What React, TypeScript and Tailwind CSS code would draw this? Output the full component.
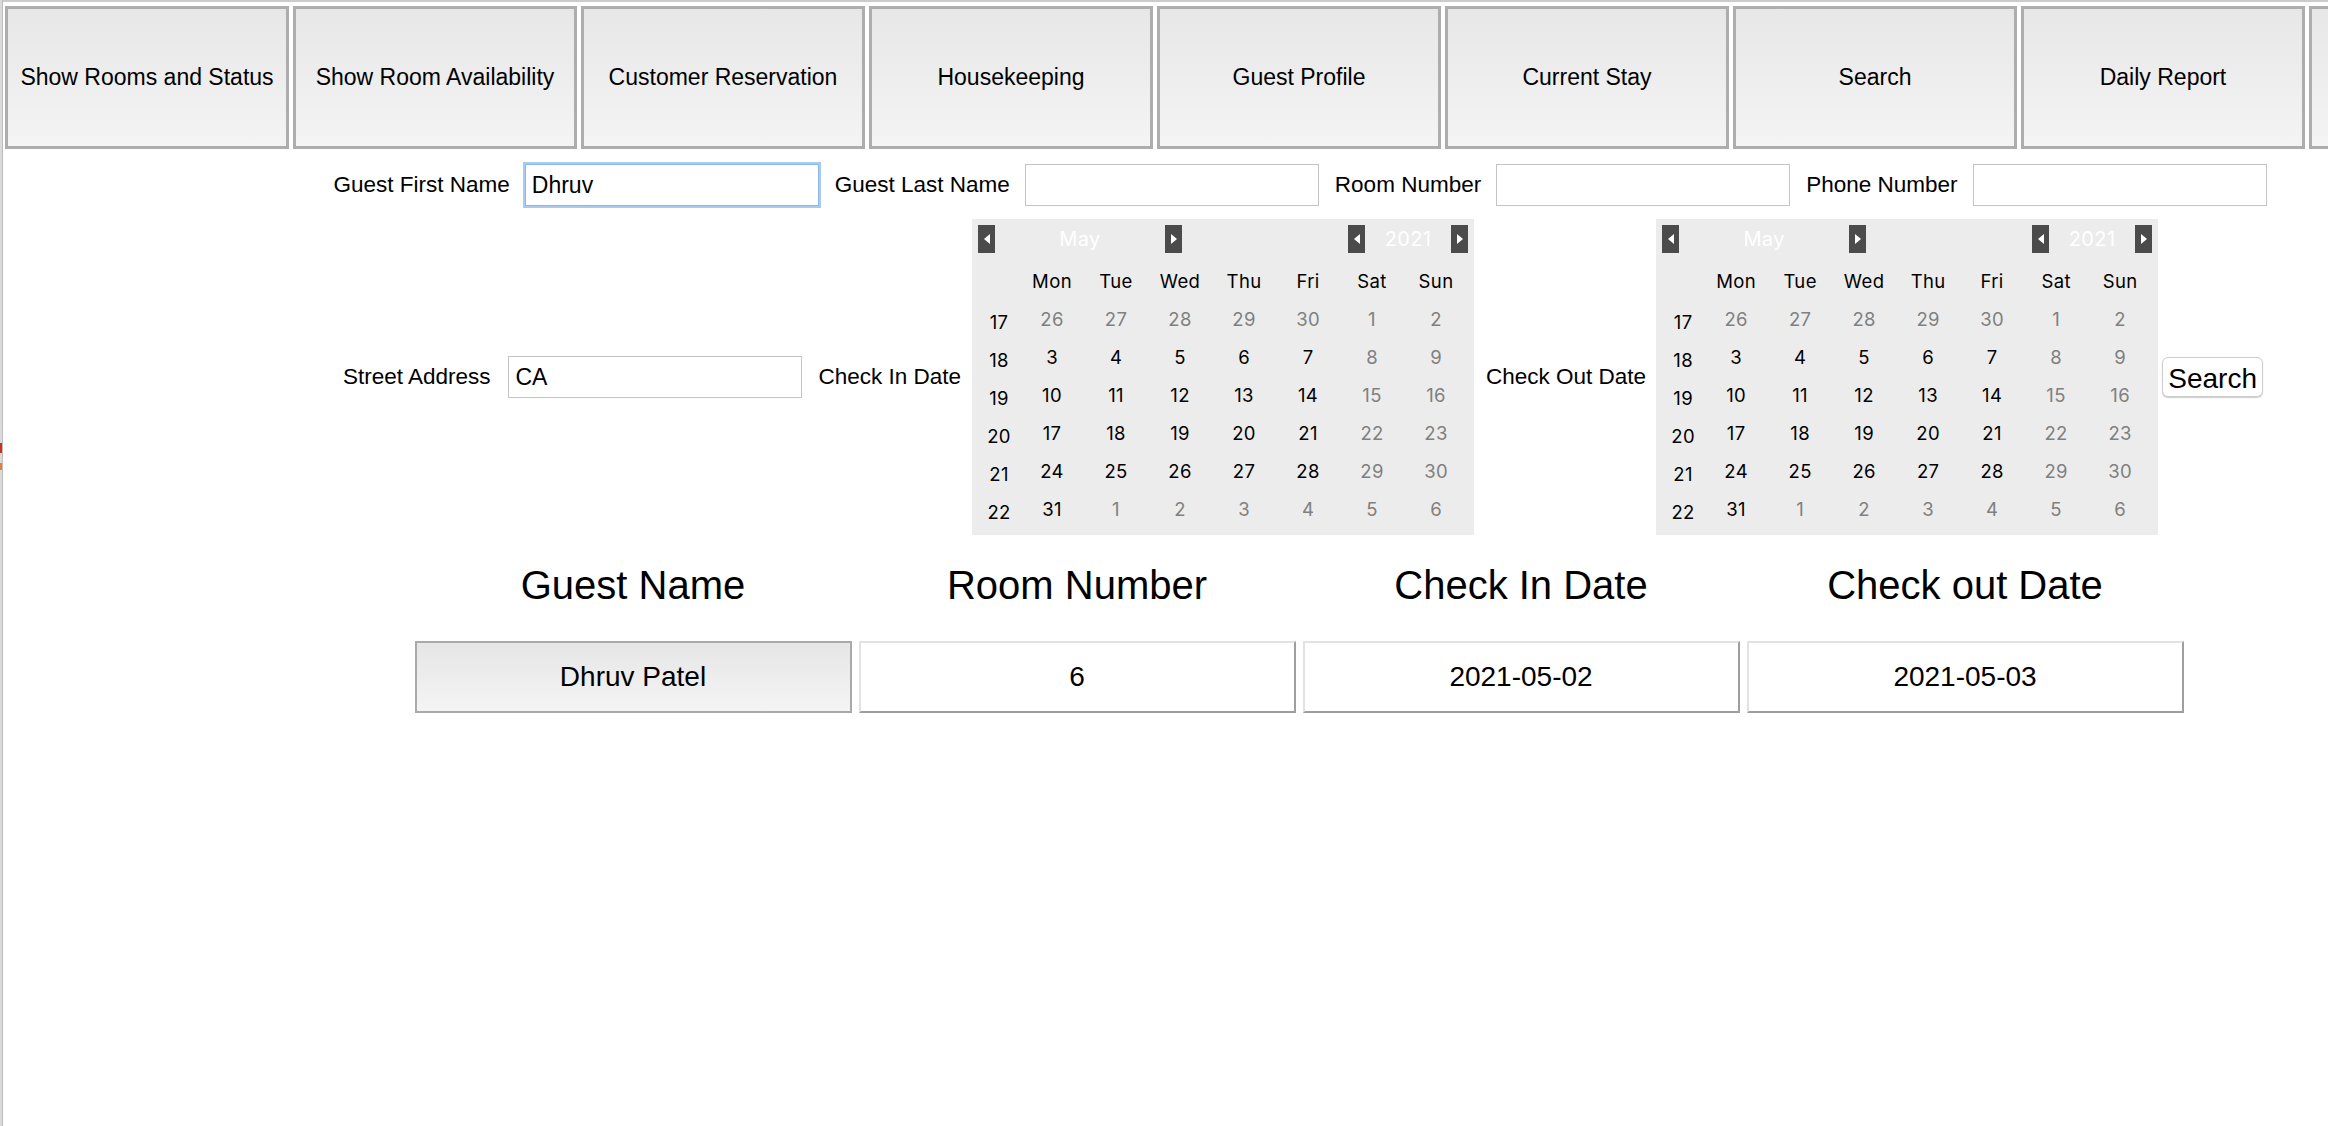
const navItems = [
  "Show Rooms and Status",
  "Show Room Availability",
  "Customer Reservation",
  "Housekeeping",
  "Guest Profile",
  "Current Stay",
  "Search",
  "Daily Report",
  "",
];

const dayNames = ["Mon", "Tue", "Wed", "Thu", "Fri", "Sat", "Sun"];
const weekNums = [17, 18, 19, 20, 21, 22];

// April 26 .. June 6, 2021
const days = Array.from({ length: 42 }, (_, i) => {
  if (i < 5) return { n: 26 + i, muted: true };
  const d = i - 4;
  if (d <= 31) return { n: d, muted: i % 7 >= 5 };
  return { n: d - 31, muted: true };
});

function Arrow({ dir }: { dir: "left" | "right" }) {
  return (
    <div className="flex h-[28px] w-[17px] items-center justify-center bg-[#4b4b4b]">
      <svg width="6" height="10" viewBox="0 0 6 10">
        {dir === "left" ? (
          <polygon points="6,0 6,10 0,5" fill="#fff" />
        ) : (
          <polygon points="0,0 0,10 6,5" fill="#fff" />
        )}
      </svg>
    </div>
  );
}

function Calendar() {
  return (
    <div className="w-[502px] bg-[#ececec] p-[6px] font-['Inter',sans-serif] text-[18.5px] tracking-[0.02em]">
      <div className="flex h-[28px] justify-between">
        <div className="flex items-center">
          <Arrow dir="left" />
          <span className="w-[170px] text-center text-[20px] text-white">May</span>
          <Arrow dir="right" />
        </div>
        <div className="flex items-center">
          <Arrow dir="left" />
          <span className="w-[86px] text-center text-[20px] text-white">2021</span>
          <Arrow dir="right" />
        </div>
      </div>
      <div className="mt-[10px] grid grid-cols-[42px_repeat(7,64px)] auto-rows-[38px] items-center text-center">
        <span />
        {dayNames.map((d) => (
          <span key={d} className="text-black">
            {d}
          </span>
        ))}
        {weekNums.map((w, r) => (
          <div key={w} className="contents">
            <span className="pt-[5px] text-black">{w}</span>
            {days.slice(r * 7, r * 7 + 7).map((d, j) => (
              <span key={j} className={d.muted ? "text-[#808080]" : "text-black"}>
                {d.n}
              </span>
            ))}
          </div>
        ))}
      </div>
    </div>
  );
}

function Field({ label, value, focused }: { label: string; value?: string; focused?: boolean }) {
  return (
    <div className="flex items-center gap-[15px]">
      <span className="whitespace-nowrap">{label}</span>
      <div
        className={
          "flex h-[42px] w-[294px] items-center border bg-white px-[6px] text-[23px] " +
          (focused ? "border-[#8fb8ea] outline-2 outline-[#a9cbf3]" : "border-[#c4c4c4]")
        }
      >
        {value}
      </div>
    </div>
  );
}

export default function App() {
  return (
    <div className="flex h-screen w-full overflow-hidden bg-white font-['Liberation_Sans',Arial,sans-serif] text-[22.5px] text-black">
      {/* window edge */}
      <div className="flex w-[3px] shrink-0 flex-col border-r border-[#bdbdbd] bg-[#dadada]">
        <div className="mt-[443px] h-[10px] bg-[#c8321e]" />
        <div className="mt-[10px] h-[7px] bg-[#e0803a]" />
      </div>

      <div className="flex w-[2600px] shrink-0 flex-col items-center border-t-2 border-[#cbcbcb]">
        {/* nav */}
        <div className="flex gap-[4px] self-start pl-[2px] pt-[4px]">
          {navItems.map((item, i) => (
            <button
              key={i}
              className="flex h-[143px] w-[284px] shrink-0 items-center justify-center border-[3px] border-[#adadad] bg-gradient-to-b from-[#e7e7e7] to-[#f4f4f4] text-[23px] text-black"
            >
              {item}
            </button>
          ))}
        </div>

        {/* search fields */}
        <div className="mt-[15px] flex items-center gap-[16px] pr-[6px]">
          <Field label="Guest First Name" value="Dhruv" focused />
          <Field label="Guest Last Name" />
          <Field label="Room Number" />
          <Field label="Phone Number" />
        </div>

        <div className="mt-[13px] flex items-center">
          <span className="whitespace-nowrap">Street Address</span>
          <div className="ml-[18px] flex h-[42px] w-[294px] items-center border border-[#c4c4c4] px-[6px] text-[23px]">
            CA
          </div>
          <span className="ml-[16px] whitespace-nowrap">Check In Date</span>
          <div className="ml-[11px]">
            <Calendar />
          </div>
          <span className="ml-[12px] whitespace-nowrap">Check Out Date</span>
          <div className="ml-[10px]">
            <Calendar />
          </div>
          <button className="ml-[4px] h-[40px] w-[101px] rounded-[6px] border border-[#cdcdcd] bg-white text-[28px] shadow-[0_1px_1px_rgba(0,0,0,0.2)]">
            Search
          </button>
        </div>

        {/* results */}
        <div className="mt-[27px] grid grid-cols-[repeat(4,437px)] gap-x-[7px] pr-[8px]">
          {["Guest Name", "Room Number", "Check In Date", "Check out Date"].map((h) => (
            <div key={h} className="h-[46px] text-center text-[40px] leading-[46px]">
              {h}
            </div>
          ))}
          <div className="mt-[33px] flex h-[72px] items-center justify-center border-2 border-[#a9a9a9] bg-gradient-to-b from-[#e6e6e6] to-[#f4f4f4] text-[28px]">
            Dhruv Patel
          </div>
          {["6", "2021-05-02", "2021-05-03"].map((v) => (
            <div
              key={v}
              className="mt-[33px] flex h-[72px] items-center justify-center border-2 border-t-[#e2e2e2] border-l-[#e2e2e2] border-b-[#9e9e9e] border-r-[#9e9e9e] bg-white text-[28px]"
            >
              {v}
            </div>
          ))}
        </div>
      </div>
    </div>
  );
}
